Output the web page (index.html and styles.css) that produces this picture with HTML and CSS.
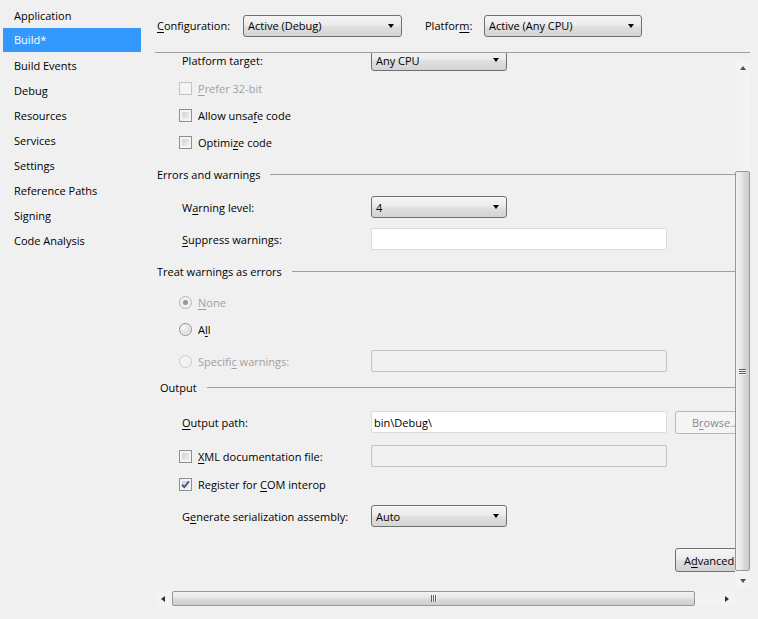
FILE: index.html
```html
<!DOCTYPE html>
<html>
<head>
<meta charset="utf-8">
<title>Build</title>
<link rel="stylesheet" href="styles.css">
</head>
<body>
<div class="app">
  <nav class="nav">
    <div class="nav-item">Application</div>
    <div class="nav-item active">Build*</div>
    <div class="nav-item">Build Events</div>
    <div class="nav-item">Debug</div>
    <div class="nav-item">Resources</div>
    <div class="nav-item">Services</div>
    <div class="nav-item">Settings</div>
    <div class="nav-item">Reference Paths</div>
    <div class="nav-item">Signing</div>
    <div class="nav-item">Code Analysis</div>
  </nav>
  <main class="main">
    <div class="topbar">
      <span class="lbl lbl-config"><u>C</u>onfiguration:</span>
      <div class="combo combo-config"><span class="combo-text">Active (Debug)</span><i class="arrow"></i></div>
      <span class="lbl lbl-platform">Platfor<u>m</u>:</span>
      <div class="combo combo-platform"><span class="combo-text">Active (Any CPU)</span><i class="arrow"></i></div>
    </div>
    <div class="pane">
      <div class="pane-top">
        <div class="viewport">
          <div class="content">
            <div class="row">
              <span class="field-label">Platform tar<u>g</u>et:</span>
              <div class="combo combo-small"><span class="combo-text">Any CPU</span><i class="arrow"></i></div>
            </div>
            <div class="row check sp-6 disabled">
              <span class="cb cb-disabled"></span><span class="cb-text"><u>P</u>refer 32-bit</span>
            </div>
            <div class="row check sp-5">
              <span class="cb"></span><span class="cb-text">Allow unsa<u>f</u>e code</span>
            </div>
            <div class="row check sp-5">
              <span class="cb"></span><span class="cb-text">Optimi<u>z</u>e code</span>
            </div>
            <div class="group sp-10"><span>Errors and warnings</span></div>
            <div class="row sp-11">
              <span class="field-label">W<u>a</u>rning level:</span>
              <div class="combo combo-small"><span class="combo-text">4</span><i class="arrow"></i></div>
            </div>
            <div class="row sp-10">
              <span class="field-label"><u>S</u>uppress warnings:</span>
              <div class="textbox"></div>
            </div>
            <div class="group sp-10"><span>Treat warnings as errors</span></div>
            <div class="row check sp-9 disabled">
              <span class="rb rb-checked-disabled"></span><span class="cb-text"><u>N</u>one</span>
            </div>
            <div class="row check sp-5">
              <span class="rb"></span><span class="cb-text">A<u>l</u>l</span>
            </div>
            <div class="row check sp-10 disabled">
              <span class="check-wrap"><span class="rb rb-disabled"></span><span class="cb-text">Specifi<u>c</u> warnings:</span></span>
              <div class="textbox textbox-disabled"></div>
            </div>
            <div class="group group-output sp-4"><span>Output</span></div>
            <div class="row sp-13">
              <span class="field-label"><u>O</u>utput path:</span>
              <div class="textbox"><span class="tb-text">bin\Debug\</span></div>
              <div class="btn btn-disabled">B<u>r</u>owse...</div>
            </div>
            <div class="row check sp-12">
              <span class="check-wrap"><span class="cb"></span><span class="cb-text"><u>X</u>ML documentation file:</span></span>
              <div class="textbox textbox-disabled"></div>
            </div>
            <div class="row check sp-6">
              <span class="cb cb-checked"><svg width="11" height="11" viewBox="0 0 11 11"><path d="M2 5.6 L4.3 8.2 L9 2.2" fill="none" stroke="#3d4f8a" stroke-width="1.8"/></svg></span><span class="cb-text">Register for <u>C</u>OM interop</span>
            </div>
            <div class="row sp-10">
              <span class="field-label">G<u>e</u>nerate serialization assembly:</span>
              <div class="combo combo-small"><span class="combo-text">Auto</span><i class="arrow"></i></div>
            </div>
            <div class="actions sp-21">
              <div class="btn">A<u>d</u>vanced...</div>
            </div>
          </div>
        </div>
        <div class="vscroll">
          <div class="sbtn"><i class="tri tri-up"></i></div>
          <div class="vtrack-top"></div>
          <div class="vthumb"><span class="grip-v"><i></i><i></i><i></i></span></div>
          <div class="vtrack-rest"></div>
          <div class="sbtn"><i class="tri tri-down"></i></div>
        </div>
      </div>
      <div class="pane-bottom">
        <div class="hscroll">
          <div class="hbtn"><i class="tri tri-left"></i></div>
          <div class="htrack-left"></div>
          <div class="hthumb"><span class="grip-h"><i></i><i></i><i></i></span></div>
          <div class="htrack-rest"></div>
          <div class="hbtn"><i class="tri tri-right"></i></div>
        </div>
        <div class="corner"></div>
      </div>
    </div>
  </main>
</div>
</body>
</html>
```
FILE: styles.css
```css
html, body {
  margin: 0;
  padding: 0;
}
body {
  background: #f0f0f0;
  font-family: "Open Sans", "Noto Sans", sans-serif;
  font-size: 11px;
  color: #000;
  width: 758px;
  height: 619px;
  overflow: hidden;
}
u { text-decoration: underline; text-underline-offset: 2px; }

.app {
  display: flex;
  height: 619px;
}

/* left navigation */
.nav {
  width: 155px;
  flex: none;
  padding-top: 3px;
  box-sizing: border-box;
}
.nav-item {
  height: 25px;
  line-height: 25px;
  padding-left: 14px;
  white-space: nowrap;
}
.nav-item.active {
  position: relative;
  margin-left: 3px;
  width: 127px;
  padding-left: 11px;
  height: 24px;
  line-height: 24px;
  margin-bottom: 1px;
  background: #3399ff;
  color: #fff;
}
.nav-item.active::after {
  content: "";
  position: absolute;
  left: 127px;
  top: 6px;
  border-top: 6px solid transparent;
  border-bottom: 6px solid transparent;
  border-left: 9px solid #3399ff;
}

/* main */
.main {
  flex: 1;
  padding-right: 8px;
  display: flex;
  flex-direction: column;
  min-width: 0;
}
.topbar {
  height: 53px;
  box-sizing: border-box;
  border-bottom: 1px solid #a0a0a0;
  display: flex;
  align-items: center;
  padding-left: 2px;
  padding-bottom: 1px;
  flex: none;
}
.lbl { white-space: nowrap; }
.lbl-config { width: 86px; }
.lbl-platform { width: 59px; margin-left: 23px; }

.combo {
  height: 22px;
  box-sizing: border-box;
  border: 1px solid #707070;
  border-radius: 3px;
  background: linear-gradient(#f5f5f5 0%, #ececec 45%, #dfdfdf 55%, #d4d4d4 100%);
  display: flex;
  align-items: center;
  padding: 0 4px 0 4px;
  flex: none;
}
.combo-text {
  flex: 1;
  white-space: nowrap;
  overflow: hidden;
}
.arrow {
  width: 0;
  height: 0;
  border-left: 3.5px solid transparent;
  border-right: 3.5px solid transparent;
  border-top: 4px solid #000;
  margin-right: 3px;
}
.combo-config { width: 159px; }
.combo-platform { width: 158px; }
.combo-small { width: 136px; }

/* pane */
.pane {
  display: flex;
  flex-direction: column;
  flex: none;
}
.pane-top {
  display: flex;
  height: 538px;
}
.viewport {
  width: 580px;
  height: 538px;
  overflow: hidden;
  flex: none;
}
.content {
  width: 620px;
  margin-top: -4px;
}

.row {
  display: flex;
  align-items: center;
  height: 22px;
  padding-left: 27px;
  white-space: nowrap;
}
.row.check { padding-left: 24px; }
.field-label { width: 189px; flex: none; }
.check-wrap { width: 192px; flex: none; display: flex; align-items: center; }
.cb-text { margin-left: 6px; }
.disabled .cb-text { color: #a0a0a0; }

.sp-4 { margin-top: 4px; }
.sp-5 { margin-top: 5px; }
.sp-6 { margin-top: 6px; }
.sp-9 { margin-top: 9px; }
.sp-10 { margin-top: 10px; }
.sp-11 { margin-top: 11px; }
.sp-12 { margin-top: 12px; }
.sp-13 { margin-top: 13px; }
.sp-21 { margin-top: 21px; }

/* group headings */
.group {
  display: flex;
  align-items: center;
  height: 22px;
  padding-left: 2px;
  white-space: nowrap;
}
.group::after {
  content: "";
  flex: 1;
  height: 1px;
  background: #a0a0a0;
  margin-left: 10px;
  margin-right: 40px;
}
.group-output { padding-left: 5px; }

/* checkboxes & radios */
.cb {
  width: 13px;
  height: 13px;
  box-sizing: border-box;
  flex: none;
  border: 1px solid #8e8f8f;
  background: linear-gradient(135deg, #cbcbcb, #f7f7f7);
  box-shadow: inset 0 0 0 2px #f4f4f4;
  display: flex;
  align-items: center;
  justify-content: center;
}
.cb-disabled {
  border-color: #c4c4c4;
  background: #f4f4f4;
  box-shadow: none;
}
.cb-checked svg { display: block; }

.rb {
  width: 13px;
  height: 13px;
  box-sizing: border-box;
  flex: none;
  border-radius: 50%;
  border: 1px solid #8e8f8f;
  background: radial-gradient(circle at 35% 35%, #f8f8f8 0%, #dcdcdc 60%, #c8c8c8 100%);
  box-shadow: inset 0 0 0 1px #f4f4f4;
}
.rb-checked-disabled {
  border-color: #b4b4b4;
  background: radial-gradient(circle, #8f8f8f 0, #a5a5a5 2.5px, #f0f0f0 3px, #e2e2e2 100%);
}
.rb-disabled {
  border-color: #c8c8c8;
  background: #f3f3f3;
  box-shadow: none;
}

/* text boxes & buttons */
.textbox {
  width: 296px;
  height: 22px;
  box-sizing: border-box;
  border: 1px solid #dcdcdc;
  border-radius: 2px;
  background: #fff;
  flex: none;
  display: flex;
  align-items: center;
  padding-left: 2px;
}
.textbox-disabled {
  background: #f0f0f0;
  border-color: #c2c2c2;
}
.btn {
  width: 75px;
  height: 24px;
  box-sizing: border-box;
  border: 1px solid #707070;
  border-radius: 3px;
  background: linear-gradient(#f5f5f5 0%, #ececec 45%, #dfdfdf 55%, #d2d2d2 100%);
  flex: none;
  display: flex;
  align-items: center;
  padding-left: 8px;
  white-space: nowrap;
}
.row .btn { margin-left: 8px; height: 23px; }
.btn-disabled {
  background: #f4f4f4;
  border-color: #b8b8b8;
  color: #8a8a8a;
  padding-left: 16px;
}
.actions {
  display: flex;
  padding-left: 520px;
  height: 24px;
}

/* scrollbars */
.vscroll {
  width: 15px;
  flex: none;
  display: flex;
  flex-direction: column;
  padding-top: 7px;
  padding-bottom: 2px;
  box-sizing: border-box;
  height: 538px;
}
.sbtn, .hbtn {
  display: flex;
  align-items: center;
  justify-content: center;
  flex: none;
  background: #f3f3f3;
}
.sbtn { height: 16px; }
.vtrack-top { height: 95px; flex: none; background: #f3f3f3; }
.vtrack-rest { flex: 1; background: #f3f3f3; }
.vthumb {
  height: 400px;
  flex: none;
  box-sizing: border-box;
  border: 1px solid #979797;
  border-radius: 2px;
  background: linear-gradient(to right, #f2f2f2 0%, #e6e6e6 45%, #d8d8d8 60%, #cfcfcf 100%);
  display: flex;
  align-items: center;
  justify-content: center;
}
.grip-v { display: flex; flex-direction: column; gap: 1px; }
.grip-v i { display: block; width: 7px; height: 1px; background: #606060; box-shadow: 0 1px 0 #f4f4f4; }

.pane-bottom {
  display: flex;
  height: 15px;
}
.hscroll {
  width: 580px;
  display: flex;
  flex: none;
}
.hbtn { width: 15px; }
.hbtn:last-child { width: 17px; }
.htrack-left { width: 2px; flex: none; background: #f3f3f3; }
.htrack-rest { flex: 1; background: #f3f3f3; }
.hthumb {
  width: 523px;
  flex: none;
  box-sizing: border-box;
  border: 1px solid #979797;
  border-radius: 2px;
  background: linear-gradient(#f2f2f2 0%, #e6e6e6 45%, #d8d8d8 60%, #cfcfcf 100%);
  display: flex;
  align-items: center;
  justify-content: center;
}
.grip-h { display: flex; gap: 1px; }
.grip-h i { display: block; width: 1px; height: 7px; background: #606060; box-shadow: 1px 0 0 #f4f4f4; }
.corner { width: 15px; background: #f0f0f0; }

.tri { width: 0; height: 0; display: block; }
.tri-up { border-left: 3.5px solid transparent; border-right: 3.5px solid transparent; border-bottom: 4px solid #505050; }
.tri-down { border-left: 3.5px solid transparent; border-right: 3.5px solid transparent; border-top: 4px solid #505050; }
.tri-left { border-top: 3.5px solid transparent; border-bottom: 3.5px solid transparent; border-right: 4px solid #303030; }
.tri-right { border-top: 3.5px solid transparent; border-bottom: 3.5px solid transparent; border-left: 4px solid #303030; }
```
